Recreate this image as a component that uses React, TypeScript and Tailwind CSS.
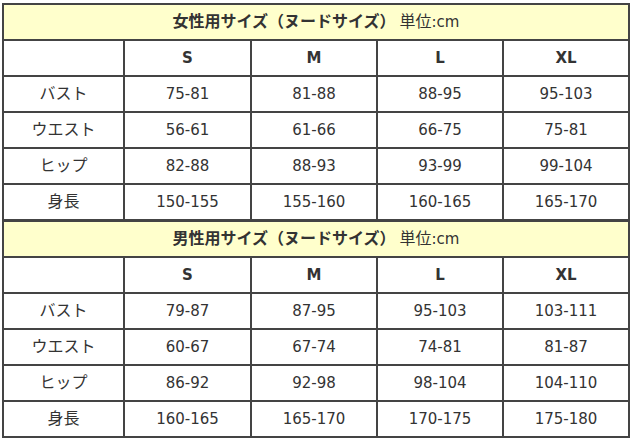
import React from 'react';

interface SizeTable {
  title: string;
  rows: { label: string; values: string[] }[];
}

const sizes = ['S', 'M', 'L', 'XL'];

const tables: SizeTable[] = [
  {
    title: '女性用サイズ（ヌードサイズ）',
    rows: [
      { label: 'バスト', values: ['75-81', '81-88', '88-95', '95-103'] },
      { label: 'ウエスト', values: ['56-61', '61-66', '66-75', '75-81'] },
      { label: 'ヒップ', values: ['82-88', '88-93', '93-99', '99-104'] },
      { label: '身長', values: ['150-155', '155-160', '160-165', '165-170'] },
    ],
  },
  {
    title: '男性用サイズ（ヌードサイズ）',
    rows: [
      { label: 'バスト', values: ['79-87', '87-95', '95-103', '103-111'] },
      { label: 'ウエスト', values: ['60-67', '67-74', '74-81', '81-87'] },
      { label: 'ヒップ', values: ['86-92', '92-98', '98-104', '104-110'] },
      { label: '身長', values: ['160-165', '165-170', '170-175', '175-180'] },
    ],
  },
];

const cell = 'h-[36px] border-r-2 border-b-2 border-[#444] text-center align-middle p-0';

function Table({ data }: { data: SizeTable }) {
  return (
    <table className="border-separate border-spacing-0 border-l-2 border-t-2 border-[#444] table-fixed w-[628px]">
      <colgroup>
        <col className="w-[121px]" />
        <col className="w-[127px]" />
        <col className="w-[126px]" />
        <col className="w-[126px]" />
        <col className="w-[126px]" />
      </colgroup>
      <tbody>
        <tr>
          <td colSpan={5} className={`${cell} bg-[#ffffcc]`}>
            <span className="font-bold text-[16px]">{data.title}</span>
            <span className="ml-[4px] text-[16px]">単位</span>
            <span>:cm</span>
          </td>
        </tr>
        <tr>
          <td className={cell}></td>
          {sizes.map((s) => (
            <td key={s} className={`${cell} font-bold`}>{s}</td>
          ))}
        </tr>
        {data.rows.map((row) => (
          <tr key={row.label}>
            <td className={`${cell} text-[16px]`}>{row.label}</td>
            {row.values.map((v, i) => (
              <td key={i} className={cell}>{v}</td>
            ))}
          </tr>
        ))}
      </tbody>
    </table>
  );
}

export default function App() {
  return (
    <div
      className="w-[632px] h-[444px] bg-white pl-[2px] pt-[3px] text-[15px] text-[#333] leading-none"
      style={{ fontFamily: '"DejaVu Sans", "Noto Sans CJK JP", sans-serif' }}
    >
      <Table data={tables[0]} />
      <div className="-mt-[1px]">
        <Table data={tables[1]} />
      </div>
    </div>
  );
}
